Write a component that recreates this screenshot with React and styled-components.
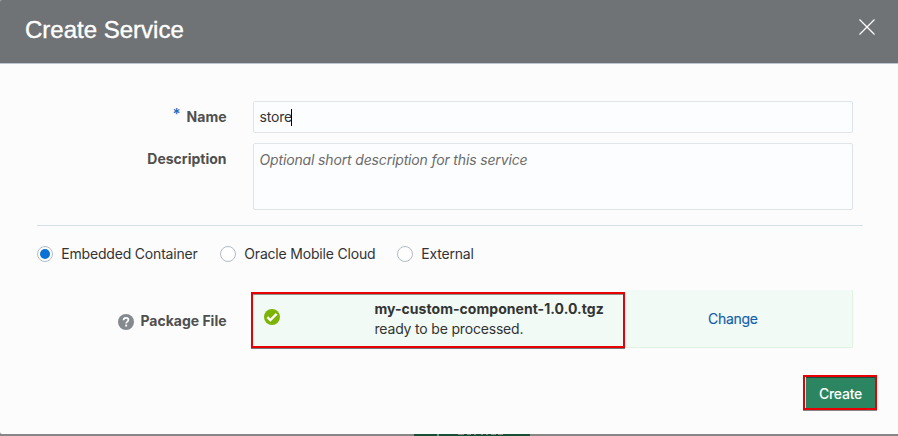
import React from "react";
import styled, { createGlobalStyle } from "styled-components";

const GlobalStyle = createGlobalStyle`
  *, *::before, *::after { box-sizing: border-box; }
  body { margin: 0; background: #888686; overflow: hidden; font-family: Inter, sans-serif; }
`;

const Page = styled.div`
  height: 436px;
  display: flex;
  flex-direction: column;
  background: #888686;
`;

const Dialog = styled.section`
  height: 434px;
  display: flex;
  flex-direction: column;
  background: #fcfcfc;
  border-radius: 2px 0 0 2px;
  overflow: hidden;
  color: #333;
  font-size: 14px;
  line-height: 20px;
`;

const Header = styled.header`
  height: 64px;
  flex: none;
  display: flex;
  align-items: flex-start;
  justify-content: space-between;
  padding: 16px 23px 0 25px;
  background: #6f7375;
  border-bottom: 1px solid #bcc7d0;
`;

const Title = styled.h1`
  margin: 0;
  color: #fff;
  font: 400 24px/28px "Liberation Sans", sans-serif;
  -webkit-text-stroke: 0.4px #fff;
`;

const CloseButton = styled.button`
  margin: 3px 0 0;
  padding: 0;
  border: 0;
  background: none;
  width: 16px;
  height: 16px;
  svg { display: block; }
`;

const Fields = styled.div`
  display: grid;
  grid-template-columns: 226.5px 600px;
  column-gap: 26.5px;
  row-gap: 10px;
  padding-top: 37px;
`;

const Label = styled.label`
  display: flex;
  justify-content: flex-end;
  align-items: flex-start;
  padding-top: ${(p) => p.$top}px;
  font-weight: 700;
  color: #4f4f4f;
`;

const Required = styled.span`
  color: #1b6fc0;
  font-size: 15px;
  font-weight: 600;
  line-height: 16px;
  margin: -1px 6px 0 0;
`;

const Field = styled.div`
  height: ${(p) => p.$height}px;
  padding: ${(p) => p.$top}px 5.5px 0;
  display: flex;
  align-items: flex-start;
  border: 1px solid #dfe4e7;
  border-radius: 2px;
  background: #fcfdfe;
`;

const Value = styled.span`
  letter-spacing: -0.2px;
`;

const Caret = styled.span`
  width: 1px;
  height: 17px;
  margin: 2px 0 0 -0.5px;
  background: #000;
`;

const Placeholder = styled.span`
  font-style: italic;
  color: #6b6b6b;
  letter-spacing: -0.15px;
`;

const Divider = styled.hr`
  width: 826px;
  height: 1px;
  margin: 15px 0 0 37px;
  border: 0;
  flex: none;
  background: #d5dfe6;
`;

const Options = styled.div`
  display: flex;
  gap: 22px;
  padding: 18px 0 0 37px;
  height: 64px;
  flex: none;
`;

const Option = styled.label`
  display: flex;
  align-items: flex-start;
  gap: 8.3px;
  width: ${(p) => p.$width}px;
  white-space: nowrap;
  letter-spacing: -0.19px;
`;

const Radio = styled.span`
  width: 16px;
  height: 16px;
  margin-top: 2px;
  flex: none;
  display: grid;
  place-items: center;
  border: 1px solid #b2bcc5;
  border-radius: 50%;
  background: #fff;
  &::after {
    content: "";
    width: 10px;
    height: 10px;
    border-radius: 50%;
    background: ${(p) => (p.$checked ? "#0b72d3" : "transparent")};
  }
`;

const PackageRow = styled.div`
  display: flex;
  height: 59px;
  flex: none;
`;

const PackageLabel = styled(Label)`
  width: 226.5px;
  margin-right: 24.5px;
  justify-content: flex-start;
  padding-left: 118px;
  gap: 6.4px;
  white-space: nowrap;
  svg { margin-top: 3px; flex: none; }
`;

const FileStatus = styled.div`
  width: 374px;
  height: 56px;
  margin-top: 2px;
  display: flex;
  padding: 5px 0 0 11px;
  border: 2px solid #e60005;
  background: #f1faf4;
  box-shadow: 0 1px 0 #777, inset 0 1px 0 #8a8f8a;
  svg { margin-top: 10px; }
`;

const FileText = styled.div`
  margin-left: 94.5px;
  color: #333;
  letter-spacing: -0.18px;
`;

const FileName = styled.div`
  font-weight: 700;
  letter-spacing: 0.04px;
`;

const ChangeArea = styled.div`
  width: 228px;
  height: 58px;
  display: flex;
  align-items: center;
  padding-left: 83px;
  border: solid #dff4e3;
  border-width: 0 1px 1px 0;
  background: #f1faf4;
`;

const Link = styled.a`
  color: #145fa8;
  letter-spacing: -0.3px;
  -webkit-text-stroke: 0.15px #145fa8;
`;

const Footer = styled.footer`
  display: flex;
  justify-content: flex-end;
  padding: 26px 21px 0 0;
`;

const CreateButton = styled.button`
  width: 74px;
  height: 35px;
  padding: 2px 0 0 1px;
  border: 2px solid #e60005;
  background: #2b8560;
  color: #fff;
  font: 500 14px/20px Inter, sans-serif;
  letter-spacing: -0.25px;
  box-shadow: 0 1px 0 #858585, inset 1px 0 0 #f8fffa, inset 0 1px 0 #1d4d39;
`;

const Backdrop = styled.div`
  height: 2px;
  display: flex;
  padding-left: 414px;
`;

const BackdropButton = styled.div`
  width: 116px;
  height: 2px;
  padding-left: 23px;
  background: #174e36;
`;

const BackdropMark = styled.svg`
  display: block;
`;

const RadioOption = ({ label, checked, width }) => (
  <Option $width={width}>
    <Radio $checked={checked} />
    {label}
  </Option>
);

export default function App() {
  return (
    <Page>
      <GlobalStyle />
      <Dialog>
        <Header>
          <Title>Create Service</Title>
          <CloseButton aria-label="Close">
            <svg width="16" height="16" viewBox="0 0 16 16" fill="none" stroke="#fff" strokeWidth="1.3">
              <path d="M.5.5l15 15M15.5.5l-15 15" />
            </svg>
          </CloseButton>
        </Header>
        <Fields>
          <Label $top={6}>
            <Required>*</Required>Name
          </Label>
          <Field $height={32} $top={5}>
            <Value>store</Value>
            <Caret />
          </Field>
          <Label $top={6}>Description</Label>
          <Field $height={67} $top={6}>
            <Placeholder>Optional short description for this service</Placeholder>
          </Field>
        </Fields>
        <Divider />
        <Options>
          <RadioOption label="Embedded Container" checked width={161} />
          <RadioOption label="Oracle Mobile Cloud" width={155} />
          <RadioOption label="External" width={90} />
        </Options>
        <PackageRow>
          <PackageLabel $top={21}>
            <svg width="16" height="16" viewBox="0 0 16 16">
              <circle cx="8" cy="8" r="8" fill="#858a8e" />
              <path d="M5.5 6.2C5.6 4.6 6.7 3.9 8 3.9c1.4 0 2.4.8 2.4 2 0 1.7-2.2 1.7-2.2 3.5" fill="none" stroke="#fff" strokeWidth="1.7" />
              <rect x="7.2" y="10.6" width="1.9" height="1.9" fill="#fff" />
            </svg>
            <span>Package File</span>
          </PackageLabel>
          <FileStatus>
            <svg width="16" height="16" viewBox="0 0 16 16">
              <circle cx="8" cy="8" r="8" fill="#7cb305" />
              <path d="M3.4 8.1l3 3 6.2-6.2" fill="none" stroke="#fff" strokeWidth="2.3" />
            </svg>
            <FileText>
              <FileName>my-custom-component-1.0.0.tgz</FileName>
              <div>ready to be processed.</div>
            </FileText>
          </FileStatus>
          <ChangeArea>
            <Link>Change</Link>
          </ChangeArea>
        </PackageRow>
        <Footer>
          <CreateButton>Create</CreateButton>
        </Footer>
      </Dialog>
      <Backdrop>
        <BackdropButton>
          <BackdropMark width="68" height="2">
            <path d="M0 0h2v2H0zM21 0h6v1h-6zM30 0h4v1h-4zM37 0h2v1h-2zM44 0h2v1h-2zM49 0h2v1h-2zM54 0h5v1h-5zM61 0h5v1h-5z" fill="#8a8a8a" />
          </BackdropMark>
        </BackdropButton>
      </Backdrop>
    </Page>
  );
}
